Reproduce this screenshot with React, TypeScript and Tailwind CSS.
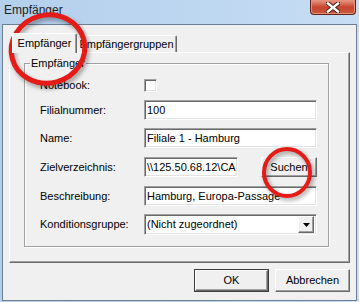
import React from 'react'

const raised =
  'border border-t-white border-l-white border-r-[#696969] border-b-[#696969] shadow-[inset_-1px_-1px_0_#a0a0a0] bg-[#f0f0f0]'
const sunken =
  'border border-t-[#a0a0a0] border-l-[#a0a0a0] border-r-white border-b-white shadow-[inset_1px_1px_0_#696969,inset_-1px_-1px_0_#e3e3e3] bg-white'

function CloseButton() {
  return (
    <div className="mr-[3px] flex h-[15px] w-[46px] items-center justify-center rounded-b-[4px] border border-t-0 border-[#5e2218] bg-gradient-to-b from-[#e49a88] via-[#c8452d] to-[#c9563f] shadow-[inset_0_0_0_1px_#e88f7c]">
      <svg width="14" height="11" viewBox="0 0 14 11">
        <path
          d="M2 1.5 L12 9.5 M12 1.5 L2 9.5"
          stroke="#3c1810"
          strokeWidth="4.2"
          strokeLinecap="square"
        />
        <path
          d="M2 1.5 L12 9.5 M12 1.5 L2 9.5"
          stroke="#ffffff"
          strokeWidth="2.4"
          strokeLinecap="square"
        />
      </svg>
    </div>
  )
}

function Row({ label, mt, children }: { label: string; mt: string; children: React.ReactNode }) {
  return (
    <div className={`flex items-center ${mt}`}>
      <span className="w-[104px] shrink-0">{label}</span>
      {children}
    </div>
  )
}

function TextBox({ value, width = 'w-[173px]' }: { value: string; width?: string }) {
  return (
    <div className={`${sunken} ${width} flex h-[20px] items-center overflow-hidden whitespace-nowrap pl-[2px]`}>
      {value}
    </div>
  )
}

function Annotations() {
  return (
    <svg className="pointer-events-none absolute inset-0" width="359" height="302">
      <defs>
        <filter id="sh" x="-20%" y="-20%" width="140%" height="140%">
          <feGaussianBlur stdDeviation="2" />
        </filter>
      </defs>
      <g fill="none" stroke="#000" strokeOpacity="0.35" filter="url(#sh)">
        <ellipse cx="50" cy="52" rx="37" ry="34" strokeWidth="5" transform="rotate(-15 50 52)" />
        <ellipse cx="289" cy="175" rx="23" ry="23.5" strokeWidth="4" />
      </g>
      <g fill="none" stroke="#e41b17">
        <ellipse cx="48" cy="49" rx="37" ry="34" strokeWidth="5" transform="rotate(-15 48 49)" />
        <ellipse cx="287" cy="172.5" rx="23" ry="23.5" strokeWidth="4" />
      </g>
    </svg>
  )
}

export default function App() {
  return (
    <div className="relative h-[302px] w-[359px] overflow-hidden bg-gradient-to-r from-[#b4cfec] to-[#c6ddf4] font-['Liberation_Sans',Arial,sans-serif] text-[11px] leading-none text-black">
      <div className="flex h-[24px] items-start justify-between">
        <span className="pl-[4px] pt-[4px] text-[12px] text-[#1e1e1e]">Empfänger</span>
        <CloseButton />
      </div>

      <div className="mx-[2px] flex h-[277px] flex-col border border-[#6d7f93] bg-[#f0f0f0]">
        {/* tab control */}
        <div className="ml-[6px] mt-[8px] w-[341px]">
          <div className="flex h-[19px] items-end pl-[3px]">
            <div className="relative z-10 -mb-[1px] flex h-[20px] w-[65px] items-start justify-center rounded-t-[2px] border border-b-0 border-t-white border-l-white border-r-[#696969] bg-[#f0f0f0] pt-[4px] shadow-[inset_-1px_0_0_#a0a0a0]">
              Empfänger
            </div>
            <div className="flex h-[17px] w-[100px] items-start justify-center rounded-t-[2px] border border-b-0 border-l-0 border-t-white border-r-[#696969] bg-[#f0f0f0] pt-[3px] shadow-[inset_-1px_0_0_#a0a0a0]">
              Empfängergruppen
            </div>
          </div>

          <div className={`${raised} h-[211px] pl-[14px] pt-[10px]`}>
            <div className="relative w-[305px] border border-[#a0a0a0] pb-[11px] pl-[15px] shadow-[1px_1px_0_white,inset_1px_1px_0_white]">
              <span className="absolute -top-[6px] left-[5px] bg-[#f0f0f0] px-[1px]">Empfänger</span>

              <Row label="Notebook:" mt="mt-[15px]">
                <div className={`${sunken} h-[13px] w-[13px]`} />
              </Row>
              <Row label="Filialnummer:" mt="mt-[8px]">
                <TextBox value="100" />
              </Row>
              <Row label="Name:" mt="mt-[8px]">
                <TextBox value="Filiale 1 - Hamburg" />
              </Row>
              <Row label="Zielverzeichnis:" mt="mt-[9px]">
                <TextBox value={'\\\\125.50.68.12\\CA'} width="w-[94px]" />
                <button className={`${raised} ml-[23px] h-[20px] w-[56px]`}>Suchen</button>
              </Row>
              <Row label="Beschreibung:" mt="mt-[9px]">
                <TextBox value="Hamburg, Europa-Passage" />
              </Row>
              <Row label="Konditionsgruppe:" mt="mt-[8px]">
                <div className={`${sunken} flex h-[21px] w-[173px] items-center justify-between pl-[2px] pr-[2px]`}>
                  <span>(Nicht zugeordnet)</span>
                  <div className={`${raised} flex h-[17px] w-[16px] items-center justify-center`}>
                    <svg width="7" height="4" viewBox="0 0 7 4">
                      <path d="M0 0 H7 L3.5 4 Z" fill="#000" />
                    </svg>
                  </div>
                </div>
              </Row>
            </div>
          </div>
        </div>

        {/* dialog buttons */}
        <div className="mr-[6px] mt-[6px] flex justify-end gap-[6px]">
          <div className="h-[23px] w-[75px] border border-[#3c3c3c]">
            <button className={`${raised} h-full w-full`}>OK</button>
          </div>
          <button className={`${raised} h-[23px] w-[75px]`}>Abbrechen</button>
        </div>
      </div>

      <Annotations />
    </div>
  )
}
